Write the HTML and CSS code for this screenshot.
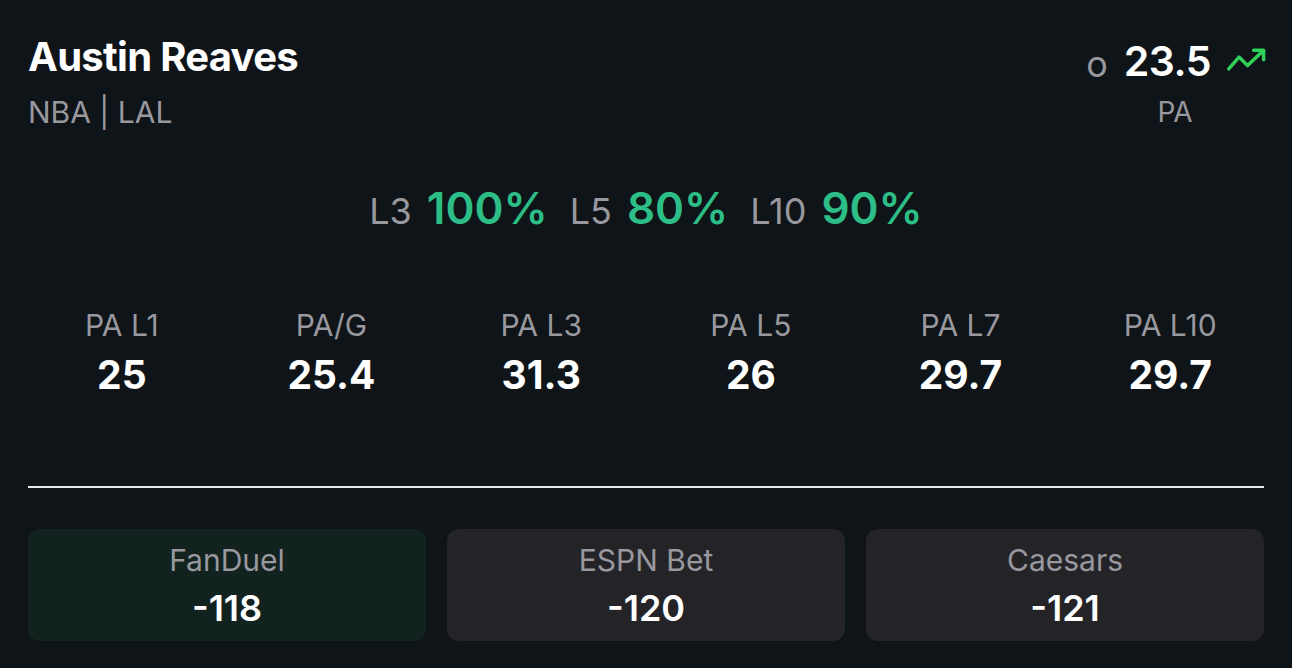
FILE: index.html
```html
<!DOCTYPE html>
<html lang="en">
<head>
<meta charset="utf-8">
<title>Austin Reaves</title>
<link rel="stylesheet" href="styles.css">
</head>
<body>
<main class="card">
  <header class="head">
    <div class="player">
      <h1 class="name">Austin Reaves</h1>
      <div class="meta">NBA | LAL</div>
    </div>
    <div class="line">
      <div class="line-row">
        <span class="ou">o</span>
        <span class="num">23.5</span>
        <svg class="trend" viewBox="0 0 40 26" width="41" height="27" aria-hidden="true">
          <polyline points="2.7,20.3 12.7,8.7 21,17 36,2.7" fill="none" stroke="#30d158" stroke-width="3.4" stroke-linecap="round" stroke-linejoin="round"/>
          <polyline points="27,2 36.7,2 36.7,11.3" fill="none" stroke="#30d158" stroke-width="3.4" stroke-linecap="round" stroke-linejoin="round"/>
        </svg>
      </div>
      <div class="stat-type">PA</div>
    </div>
  </header>

  <section class="hits">
    <span class="hit-label">L3</span><span class="hit-val">100%</span>
    <span class="hit-label">L5</span><span class="hit-val">80%</span>
    <span class="hit-label">L10</span><span class="hit-val">90%</span>
  </section>

  <section class="stats">
    <div class="stat"><div class="stat-label">PA L1</div><div class="stat-val">25</div></div>
    <div class="stat"><div class="stat-label">PA/G</div><div class="stat-val">25.4</div></div>
    <div class="stat"><div class="stat-label">PA L3</div><div class="stat-val">31.3</div></div>
    <div class="stat"><div class="stat-label">PA L5</div><div class="stat-val">26</div></div>
    <div class="stat"><div class="stat-label">PA L7</div><div class="stat-val">29.7</div></div>
    <div class="stat"><div class="stat-label">PA L10</div><div class="stat-val">29.7</div></div>
  </section>

  <hr class="divider">

  <section class="books">
    <div class="book book-best"><div class="book-name">FanDuel</div><div class="book-odds">-118</div></div>
    <div class="book"><div class="book-name">ESPN Bet</div><div class="book-odds">-120</div></div>
    <div class="book"><div class="book-name">Caesars</div><div class="book-odds">-121</div></div>
  </section>
</main>
</body>
</html>
```

FILE: styles.css
```css
* { box-sizing: border-box; }

html, body {
  margin: 0;
  padding: 0;
  background: #0e1417;
}

body {
  font-family: Inter, "Noto Sans", "Liberation Sans", sans-serif;
  color: #ffffff;
}

.card {
  width: 1292px;
  height: 668px;
  padding: 33px 28px 0 28px;
  display: flex;
  flex-direction: column;
}

.head {
  display: flex;
  justify-content: space-between;
  align-items: flex-start;
}

.name {
  margin: 0;
  font-size: 40px;
  line-height: 48px;
  font-weight: 700;
  letter-spacing: -0.7px;
  color: #ffffff;
}

.meta {
  margin-top: 13px;
  font-size: 30px;
  line-height: 36px;
  color: #98989e;
}

.line {
  display: flex;
  flex-direction: column;
  align-items: center;
  margin-top: 4px;
}

.line-row {
  display: flex;
  align-items: center;
  height: 48px;
}

.ou {
  font-size: 36px;
  line-height: 48px;
  color: #98989e;
  margin-right: 16px;
  position: relative;
  top: 3px;
}

.num {
  font-size: 41px;
  line-height: 48px;
  font-weight: 600;
  letter-spacing: -0.5px;
}

.trend {
  margin-left: 15px;
  margin-right: -3px;
  position: relative;
  top: 0px;
}

.stat-type {
  margin-top: 10px;
  font-size: 28px;
  line-height: 34px;
  color: #98989e;
}

.hits {
  margin-top: 52px;
  display: flex;
  justify-content: center;
  align-items: baseline;
  height: 52px;
}

.hit-label {
  font-size: 36px;
  line-height: 52px;
  color: #98989e;
  margin-right: 15px;
}

.hit-val {
  font-size: 44px;
  line-height: 52px;
  font-weight: 600;
  color: #2dbd86;
  margin-right: 22px;
}

.hit-val:last-child { margin-right: 0; }

.stats {
  margin: 73px -11px 0 -11px;
  display: grid;
  grid-template-columns: repeat(6, 1fr);
}

.stat {
  display: flex;
  flex-direction: column;
  align-items: center;
}

.stat-label {
  font-size: 30px;
  line-height: 36px;
  color: #98989e;
}

.stat-val {
  margin-top: 9px;
  font-size: 39px;
  line-height: 46px;
  font-weight: 700;
  color: #ffffff;
}

.divider {
  margin: 88px 0 0 0;
  border: 0;
  height: 2px;
  background: #e6e6e6;
}

.books {
  margin-top: 41px;
  display: grid;
  grid-template-columns: repeat(3, 1fr);
  gap: 21px;
}

.book {
  height: 112px;
  border-radius: 12px;
  background: #242428;
  display: flex;
  flex-direction: column;
  align-items: center;
  padding-top: 13px;
}

.book-best {
  background: #12221f;
}

.book-name {
  font-size: 30px;
  line-height: 36px;
  color: #98989e;
}

.book-odds {
  margin-top: 9px;
  font-size: 36px;
  line-height: 42px;
  font-weight: 600;
  color: #ffffff;
}
```
